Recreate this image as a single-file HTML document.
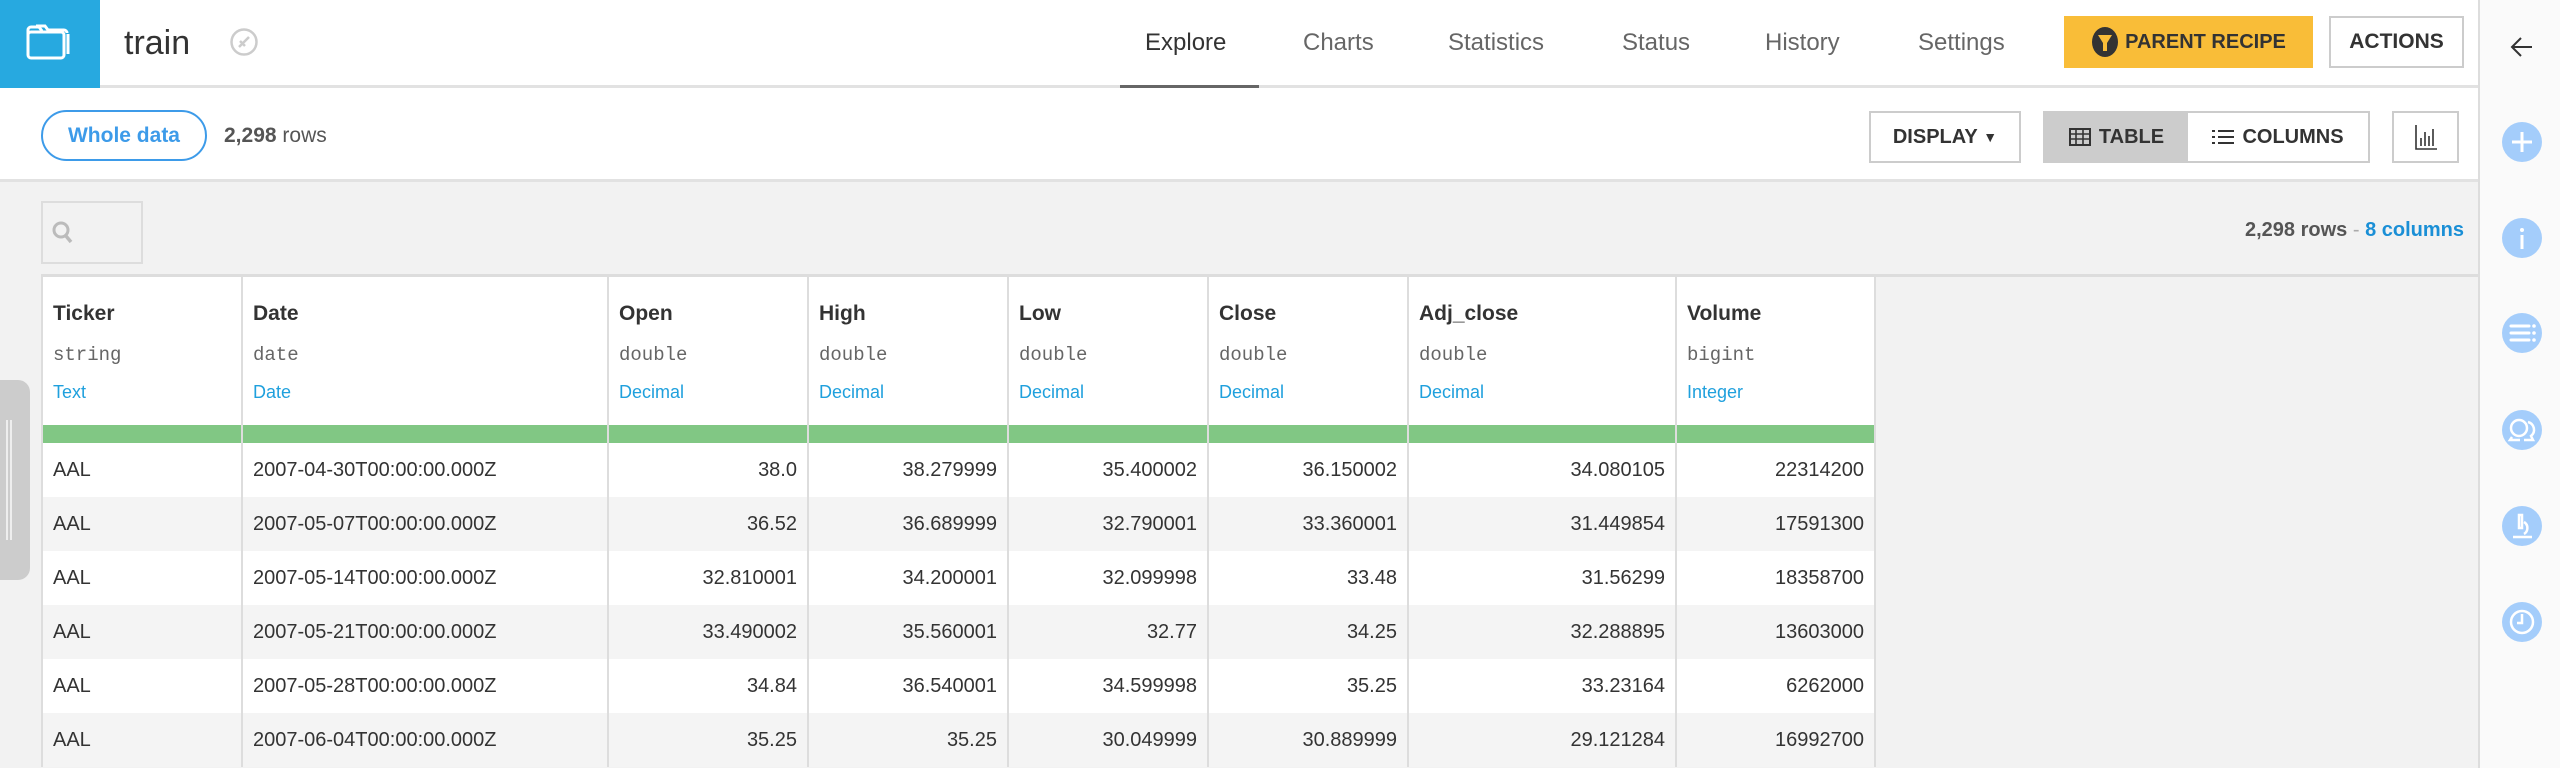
<!DOCTYPE html>
<html><head><meta charset="utf-8"><style>
*{margin:0;padding:0;box-sizing:border-box}
body{width:2560px;height:768px;overflow:hidden;background:#f2f2f2;font-family:"Liberation Sans",sans-serif;color:#333;position:relative}
.a{position:absolute}
.hdr{left:0;top:0;width:2480px;height:88px;background:#fff;border-bottom:3px solid #e2e2e2}
.bar{left:0;top:88px;width:2480px;height:94px;background:#fff;border-bottom:3px solid #e2e2e2}
.tab{top:28px;font-size:24px;color:#666;line-height:30px}
.btn{border:2px solid #ccc;background:#fff;font-weight:bold;font-size:20px;display:flex;align-items:center;justify-content:center;color:#333}
.side{left:2478px;top:0;width:82px;height:768px;background:#fafafa;border-left:2px solid #ddd}
.ic{left:2502px;width:40px;height:40px;border-radius:50%;background:#a4cdfb}
table{position:absolute;left:41px;top:277px;border-collapse:collapse;background:#fff;font-size:20px}
td,th{border-left:2px solid #ddd;border-right:2px solid #ddd;padding:0 10px;white-space:nowrap;color:#333}
th{text-align:left;vertical-align:top;font-weight:normal;height:148px;padding-top:0}
th div.n{font-weight:bold;font-size:21px;margin-top:25px;height:36px;line-height:24px}
th div.t{font-family:"Liberation Mono",monospace;font-size:19px;color:#666;height:38px;line-height:24px;margin-top:5px}
th div.m{font-size:18px;color:#1fa0dd;line-height:22px}
tr.g td{background:#81c784;height:18px;padding:0}
td{height:54px;text-align:right}
td.l{text-align:left}
tr.s td{background:#f4f4f4}
</style></head><body>
<div class="a hdr"></div>
<div class="a" style="left:0;top:0;width:100px;height:88px;background:#27a9e0"></div>
<svg class="a" style="left:26px;top:22px" width="48" height="38" viewBox="0 0 48 38"><path d="M10 4h9l3 4h16a3 3 0 0 1 3 3" fill="none" stroke="#fff" stroke-width="3"/><rect x="2" y="10" width="36" height="26" rx="3" fill="none" stroke="#fff" stroke-width="3"/><path d="M2 13V8a3 3 0 0 1 3-3h8l3 4" fill="none" stroke="#fff" stroke-width="3"/><path d="M42 12v20" stroke="#fff" stroke-width="3"/></svg>
<div class="a" style="left:124px;top:24px;font-size:34px;line-height:38px;color:#333">train</div>
<svg class="a" style="left:229px;top:27px" width="30" height="30" viewBox="0 0 30 30"><circle cx="15" cy="15" r="12.5" fill="none" stroke="#ccc" stroke-width="2.5"/><path d="M10 20L20 10M11 14l5 5" stroke="#ccc" stroke-width="2.5"/></svg>
<div class="a tab" style="left:1145px;color:#333;font-weight:500">Explore</div>
<div class="a" style="left:1120px;top:85px;width:139px;height:4px;background:#666"></div>
<div class="a tab" style="left:1303px">Charts</div>
<div class="a tab" style="left:1448px">Statistics</div>
<div class="a tab" style="left:1622px">Status</div>
<div class="a tab" style="left:1765px">History</div>
<div class="a tab" style="left:1918px">Settings</div>
<div class="a" style="left:2064px;top:16px;width:249px;height:52px;background:#f9bd38;display:flex;align-items:center;justify-content:center;font-weight:bold;font-size:20px;color:#333"><svg width="28" height="32" viewBox="0 0 28 32" style="margin-right:6px"><ellipse cx="14" cy="16" rx="13" ry="15" fill="#333"/><path d="M7 9h14l-5 8v8h-4v-8z" fill="#f9bd38"/></svg>PARENT RECIPE</div>
<div class="a btn" style="left:2329px;top:16px;width:135px;height:52px;font-size:21px">ACTIONS</div>
<div class="a bar"></div>
<div class="a" style="left:41px;top:110px;width:166px;height:51px;border:2px solid #3d9be9;border-radius:26px;color:#3d9be9;font-weight:bold;font-size:21px;display:flex;align-items:center;justify-content:center">Whole data</div>
<div class="a" style="left:224px;top:124px;font-size:21px;color:#555"><b>2,298</b> rows</div>
<div class="a btn" style="left:1869px;top:111px;width:152px;height:52px">DISPLAY&nbsp;<span style="font-size:14px">▼</span></div>
<div class="a btn" style="left:2043px;top:111px;width:327px;height:52px;justify-content:flex-start;padding:0"><div style="width:143px;height:48px;background:#ccc;display:flex;align-items:center;justify-content:center"><svg width="22" height="18" viewBox="0 0 22 18" style="margin-right:8px"><rect x="1" y="1" width="20" height="16" fill="none" stroke="#333" stroke-width="2"/><path d="M1 6h20M1 11h20M7 1v16M14 1v16" stroke="#333" stroke-width="1.6"/></svg>TABLE</div><div style="flex:1;display:flex;align-items:center;justify-content:center"><svg width="22" height="16" viewBox="0 0 22 16" style="margin-right:8px"><path d="M0 2h3M6 2h16M0 8h3M6 8h16M0 14h3M6 14h16" stroke="#333" stroke-width="2"/></svg>COLUMNS</div></div>
<div class="a btn" style="left:2392px;top:111px;width:67px;height:52px"><svg width="24" height="26" viewBox="0 0 24 26"><path d="M2 1v24h21M7 22v-8M11 22V8M15 22v-10M19 22V5" stroke="#333" stroke-width="1.6" fill="none"/></svg></div>
<div class="a" style="left:41px;top:201px;width:102px;height:63px;border:2px solid #ddd"></div>
<svg class="a" style="left:52px;top:221px" width="22" height="24" viewBox="0 0 22 24"><circle cx="9" cy="9" r="7" fill="none" stroke="#bbb" stroke-width="3"/><path d="M14 15l5 6" stroke="#bbb" stroke-width="3.5"/></svg>
<div class="a" style="left:1700px;width:764px;top:219px;text-align:right;font-size:20px;color:#555"><b>2,298 rows</b> <span style="color:#aaa">-</span> <b style="color:#1a8fd6">8 columns</b></div>
<div class="a" style="left:41px;top:274px;width:2437px;height:3px;background:#ddd"></div>
<div class="a" style="left:0;top:380px;width:30px;height:200px;background:#ccc;border-radius:0 12px 12px 0"></div>
<div class="a" style="left:6px;top:420px;width:6px;height:120px;border-left:2px solid #eee;border-right:2px solid #eee"></div>
<table>
<tr><th style="width:200px"><div class="n">Ticker</div><div class="t">string</div><div class="m">Text</div></th>
<th style="width:366px"><div class="n">Date</div><div class="t">date</div><div class="m">Date</div></th>
<th style="width:200px"><div class="n">Open</div><div class="t">double</div><div class="m">Decimal</div></th>
<th style="width:200px"><div class="n">High</div><div class="t">double</div><div class="m">Decimal</div></th>
<th style="width:200px"><div class="n">Low</div><div class="t">double</div><div class="m">Decimal</div></th>
<th style="width:200px"><div class="n">Close</div><div class="t">double</div><div class="m">Decimal</div></th>
<th style="width:268px"><div class="n">Adj_close</div><div class="t">double</div><div class="m">Decimal</div></th>
<th style="width:199px"><div class="n">Volume</div><div class="t">bigint</div><div class="m">Integer</div></th></tr>
<tr class="g"><td></td><td></td><td></td><td></td><td></td><td></td><td></td><td></td></tr>
<tr><td class="l">AAL</td><td class="l">2007-04-30T00:00:00.000Z</td><td>38.0</td><td>38.279999</td><td>35.400002</td><td>36.150002</td><td>34.080105</td><td>22314200</td></tr>
<tr class="s"><td class="l">AAL</td><td class="l">2007-05-07T00:00:00.000Z</td><td>36.52</td><td>36.689999</td><td>32.790001</td><td>33.360001</td><td>31.449854</td><td>17591300</td></tr>
<tr><td class="l">AAL</td><td class="l">2007-05-14T00:00:00.000Z</td><td>32.810001</td><td>34.200001</td><td>32.099998</td><td>33.48</td><td>31.56299</td><td>18358700</td></tr>
<tr class="s"><td class="l">AAL</td><td class="l">2007-05-21T00:00:00.000Z</td><td>33.490002</td><td>35.560001</td><td>32.77</td><td>34.25</td><td>32.288895</td><td>13603000</td></tr>
<tr><td class="l">AAL</td><td class="l">2007-05-28T00:00:00.000Z</td><td>34.84</td><td>36.540001</td><td>34.599998</td><td>35.25</td><td>33.23164</td><td>6262000</td></tr>
<tr class="s"><td class="l">AAL</td><td class="l">2007-06-04T00:00:00.000Z</td><td>35.25</td><td>35.25</td><td>30.049999</td><td>30.889999</td><td>29.121284</td><td>16992700</td></tr>
</table>
<div class="a side"></div>
<svg class="a" style="left:2510px;top:36px" width="24" height="22" viewBox="0 0 24 22"><path d="M22 11H3M11 2L2 11l9 9" fill="none" stroke="#333" stroke-width="2"/></svg>
<svg class="a ic" style="top:122px" viewBox="0 0 40 40"><path d="M20 10v20M10 20h20" stroke="#fff" stroke-width="3"/></svg>
<svg class="a ic" style="top:218px" viewBox="0 0 40 40"><circle cx="20" cy="12" r="2" fill="#fff"/><path d="M20 17v14" stroke="#fff" stroke-width="3"/></svg>
<svg class="a ic" style="top:313px" viewBox="0 0 40 40"><path d="M9 13h18M9 20h18M9 27h18" stroke="#fff" stroke-width="3" stroke-linecap="round"/><circle cx="32" cy="13" r="1.8" fill="#fff"/><circle cx="32" cy="20" r="1.8" fill="#fff"/><circle cx="32" cy="27" r="1.8" fill="#fff"/></svg>
<svg class="a ic" style="top:410px" viewBox="0 0 40 40"><circle cx="17" cy="18" r="8" fill="none" stroke="#fff" stroke-width="2.5"/><path d="M10 27l-2 3h10M26 12a8 8 0 0 1 3 14l2 4h-9" fill="none" stroke="#fff" stroke-width="2.5"/></svg>
<svg class="a ic" style="top:506px" viewBox="0 0 40 40"><path d="M17 9h3v13h-3zM22 16a7 7 0 0 1 0 12M11 31h19" fill="none" stroke="#fff" stroke-width="2.5"/></svg>
<svg class="a ic" style="top:602px" viewBox="0 0 40 40"><circle cx="20" cy="20" r="11" fill="none" stroke="#fff" stroke-width="2.5"/><path d="M20 12v9h-5" fill="none" stroke="#fff" stroke-width="2.5"/></svg>
</body></html>
